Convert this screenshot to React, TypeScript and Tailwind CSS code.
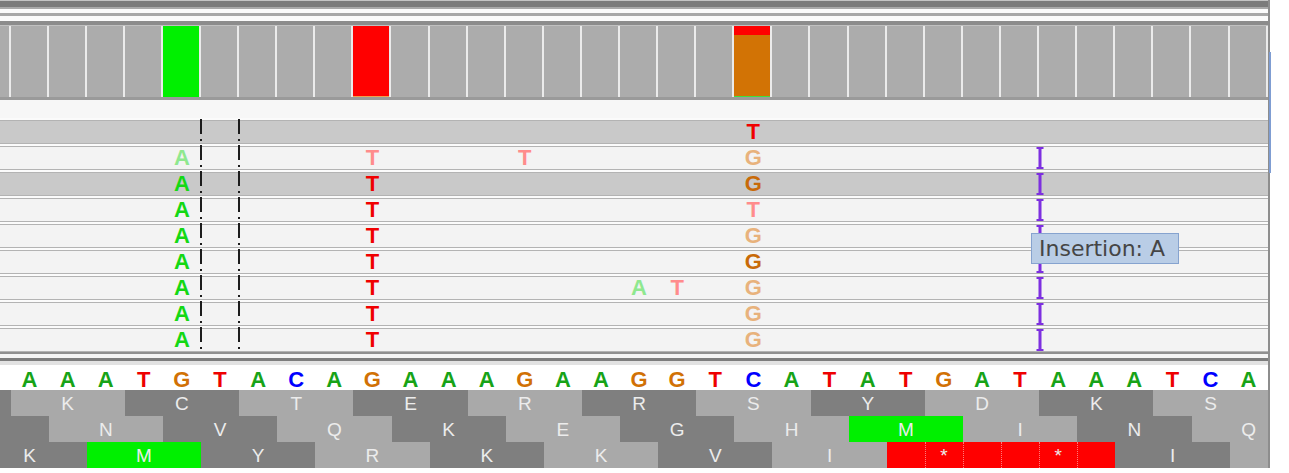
import React from "react";

// reference sequence shown in the window, one letter per base column
const SEQ = "AAATGTACAGAAAGAAGGTCATATGATAAATCA";

const seqColor: Record<string, string> = {
    A: "text-[#17a317]",
    C: "text-[#0000ff]",
    G: "text-[#d17105]",
    T: "text-[#ee0000]",
};

const hiColor: Record<string, string> = {
    A: "text-[#14d814]",
    T: "text-[#f00000]",
    G: "text-[#c86a08]",
};

const loColor: Record<string, string> = {
    A: "text-[#8fe88f]",
    T: "text-[#ff8c8c]",
    G: "text-[#e8b27c]",
};

type Mismatch = [number, string, "hi" | "lo"];
type Read = { shade: boolean; ins: boolean; mis: Mismatch[] };

const reads: Read[] = [
    { shade: true, ins: false, mis: [[19, "T", "hi"]] },
    { shade: false, ins: true, mis: [[4, "A", "lo"], [9, "T", "lo"], [13, "T", "lo"], [19, "G", "lo"]] },
    { shade: true, ins: true, mis: [[4, "A", "hi"], [9, "T", "hi"], [19, "G", "hi"]] },
    { shade: false, ins: true, mis: [[4, "A", "hi"], [9, "T", "hi"], [19, "T", "lo"]] },
    { shade: false, ins: true, mis: [[4, "A", "hi"], [9, "T", "hi"], [19, "G", "lo"]] },
    { shade: false, ins: true, mis: [[4, "A", "hi"], [9, "T", "hi"], [19, "G", "hi"]] },
    { shade: false, ins: true, mis: [[4, "A", "hi"], [9, "T", "hi"], [16, "A", "lo"], [17, "T", "lo"], [19, "G", "lo"]] },
    { shade: false, ins: true, mis: [[4, "A", "hi"], [9, "T", "hi"], [19, "G", "lo"]] },
    { shade: false, ins: true, mis: [[4, "A", "hi"], [9, "T", "hi"], [19, "G", "lo"]] },
];

type Codon = { aa: string; kind: "dark" | "light" | "start" | "stop" };

// three reading frames, each starting with the codon cut off at the left edge
const frames: { shift: string; codons: Codon[] }[] = [
    {
        shift: "-ml-[103.8px]",
        codons: "_KCTERRSYDKS".split("").map((aa, i) => ({ aa: aa === "_" ? "" : aa, kind: i % 2 ? "light" : "dark" })),
    },
    {
        shift: "-ml-[65.7px]",
        codons: "_NVQKEGHMINQ".split("").map((aa, i) => ({
            aa: aa === "_" ? "" : aa,
            kind: aa === "M" ? "start" : i % 2 ? "light" : "dark",
        })),
    },
    {
        shift: "-ml-[27.6px]",
        codons: "KMYRKKVI**I_".split("").map((aa, i) => ({
            aa: aa === "_" ? "" : aa,
            kind: aa === "M" ? "start" : aa === "*" ? "stop" : i % 2 ? "light" : "dark",
        })),
    },
];

const codonBg = {
    dark: "bg-[#7f7f7f]",
    light: "bg-[#a9a9a9]",
    start: "bg-[#00f000]",
    stop: "bg-[#ff0000]",
};

function CoverageBar({ i }: { i: number }) {
    if (i === 4) return <div className="flex-1 bg-[#00f000]" />;
    if (i === 9)
        return (
            <div className="flex-1 flex flex-col">
                <div className="flex-1 bg-[#ff0000]" />
                <div className="h-px bg-[#f0a050]" />
            </div>
        );
    if (i === 19)
        return (
            <div className="flex-1 flex flex-col">
                <div className="h-[9px] bg-[#ff0000]" />
                <div className="flex-1 bg-[#d27305]" />
                <div className="h-px bg-[#40e040]" />
            </div>
        );
    return null;
}

function InsertionMark() {
    return (
        <svg className="absolute left-[1036px] top-[3px]" width="8" height="22" viewBox="0 0 8 22">
            <rect x="0.5" y="0" width="7" height="2" fill="#7d2fe0" />
            <rect x="2.5" y="0" width="3" height="22" fill="#7d2fe0" />
            <rect x="0.5" y="20" width="7" height="2" fill="#7d2fe0" />
        </svg>
    );
}

function ReadRow({ read }: { read: Read }) {
    return (
        <div className="relative h-[26px] pt-[2px] bg-[#fbfbfb]">
            <div
                className={`h-[24px] flex overflow-hidden border-y border-[#b3b3b3] ${
                    read.shade ? "bg-[#c9c9c9]" : "bg-[#f3f3f3]"
                }`}
            >
                <div className="w-[10.5px] shrink-0" />
                {SEQ.split("").map((_, i) => {
                    const m = read.mis.find(x => x[0] === i);
                    return (
                        <div
                            key={i}
                            className={`w-[38.1px] shrink-0 flex items-center justify-center text-[22px] leading-none font-bold ${
                                m ? (m[2] === "hi" ? hiColor[m[1]] : loColor[m[1]]) : ""
                            }`}
                        >
                            {m ? m[1] : ""}
                        </div>
                    );
                })}
            </div>
            {read.ins && <InsertionMark />}
        </div>
    );
}

export default function App() {
    return (
        <div className="relative w-[1289px] h-[473px] bg-white overflow-hidden font-['Liberation_Sans',Arial,sans-serif]">
            <div className="w-[1270px] border-r-2 border-[#8d8d8d] flex flex-col">
                {/* header rulers */}
                <div className="h-px bg-[#c4c4c4]" />
                <div className="h-[6px] bg-[#7b7b7b]" />
                <div className="h-[2px] bg-[#a9a9a9]" />
                <div className="h-[4px] bg-[#fbfbfb]" />
                <div className="h-[3px] bg-[#a8a8a8]" />
                <div className="h-[5px] bg-[#fbfbfb]" />
                <div className="h-[4px] bg-[#8c8c8c]" />
                <div className="h-px bg-[#c0c0c0]" />

                {/* coverage track */}
                <div className="flex h-[71px] bg-[#acacac] overflow-hidden">
                    <div className="w-[10.5px] shrink-0 border-r-2 border-[#ebebeb]" />
                    {SEQ.split("").map((_, i) => (
                        <div key={i} className="w-[38.1px] shrink-0 border-r-2 border-[#ebebeb] flex flex-col">
                            <CoverageBar i={i} />
                        </div>
                    ))}
                </div>
                <div className="h-[3px] bg-[#9a9a9a]" />
                <div className="h-[18px] bg-[#f7f7f7]" />

                {/* alignments */}
                <div className="relative">
                    {reads.map((r, i) => (
                        <ReadRow key={i} read={r} />
                    ))}
                    <svg className="absolute inset-0 pointer-events-none" width="1268" height="234">
                        <line x1="201" y1="1" x2="201" y2="234" stroke="#1c1c1c" strokeWidth="2" strokeDasharray="15 5 2 4" />
                        <line x1="239" y1="1" x2="239" y2="234" stroke="#1c1c1c" strokeWidth="2" strokeDasharray="15 5 2 4" />
                    </svg>
                </div>

                <div className="h-[2px] bg-[#8f8f8f]" />
                <div className="h-[4px] bg-[#f4f4f4]" />
                <div className="h-[3px] bg-[#7d7d7d]" />
                <div className="h-[4px] bg-[#e2e2e2]" />

                {/* sequence */}
                <div className="flex h-[25px] pt-[4px] bg-white overflow-hidden">
                    <div className="w-[10.5px] shrink-0" />
                    {SEQ.split("").map((b, i) => (
                        <div
                            key={i}
                            className={`w-[38.1px] shrink-0 flex items-center justify-center text-[22px] leading-none font-bold ${seqColor[b]}`}
                        >
                            {b}
                        </div>
                    ))}
                </div>

                {/* translation frames */}
                {frames.map((f, fi) => (
                    <div key={fi} className="h-[26px] overflow-hidden">
                        <div className={`flex h-full ${f.shift}`}>
                            {f.codons.map((c, ci) => (
                                <div
                                    key={ci}
                                    className={`relative w-[114.3px] shrink-0 flex ${codonBg[c.kind]}`}
                                >
                                    {c.kind === "stop" &&
                                        [0, 1, 2].map(k => (
                                            <div
                                                key={k}
                                                className={`w-[38.1px] h-full ${
                                                    k > 0 || f.codons[ci - 1]?.kind === "stop"
                                                        ? "border-l border-dotted border-[#ff7a7a]"
                                                        : ""
                                                }`}
                                            />
                                        ))}
                                    <span className="absolute inset-0 flex items-center justify-center text-[19px] leading-none text-[#ececec]">
                                        {c.aa}
                                    </span>
                                </div>
                            ))}
                        </div>
                    </div>
                ))}
            </div>

            {/* scroll indicator on the right edge */}
            <div className="absolute left-[1269px] top-[52px] w-[2px] h-[121px] bg-[#7f9dd2]" />

            {/* hover tooltip */}
            <div className="absolute left-[1031px] top-[233px] w-[148px] h-[31px] bg-[#b9cde6] border border-[#86a3cf] flex items-center pl-[7px] text-[22px] leading-none text-[#454545] font-['DejaVu_Sans',sans-serif] whitespace-nowrap">
                Insertion: A
            </div>
        </div>
    );
}
